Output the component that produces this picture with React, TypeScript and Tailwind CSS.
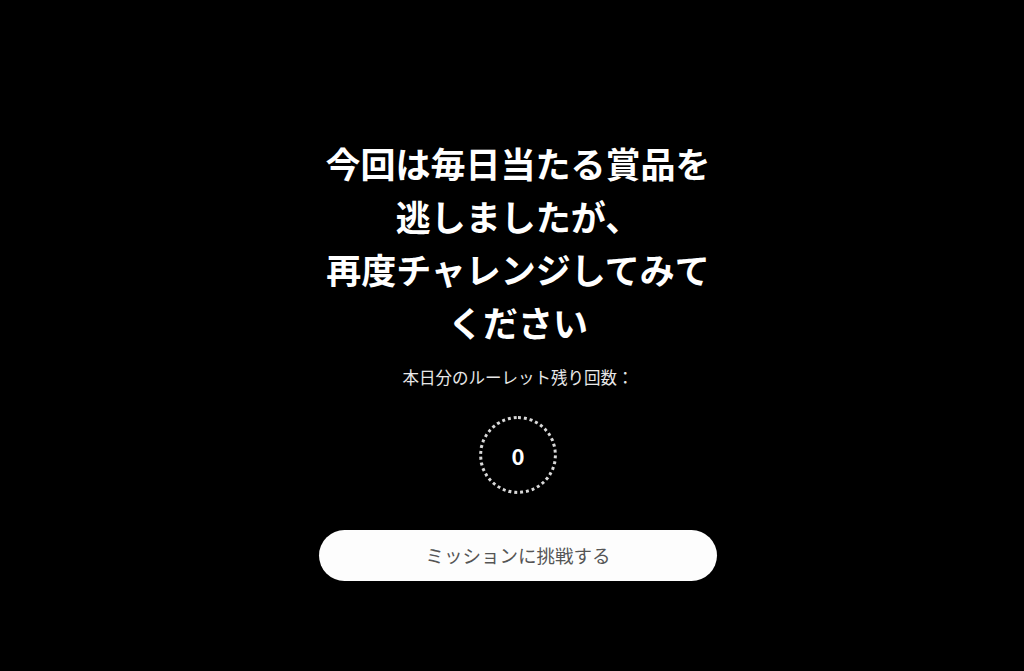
export default function App() {
  return (
    <div
      className="w-full h-[671px] bg-black flex flex-col items-center pl-3"
      style={{ fontFamily: '"Noto Sans CJK JP", "Noto Sans", sans-serif' }}
    >
      <h1 className="mt-[136px] w-[400px] text-center text-white font-bold text-[35px] leading-[53px]">
        今回は毎日当たる賞品を
        <br />
        逃しましたが、
        <br />
        再度チャレンジしてみてください
      </h1>
      <p className="mt-[17px] text-[16.5px] leading-6 text-[#e8e8e8]">本日分のルーレット残り回数：</p>
      <div className="mt-[27px] w-[78px] h-[78px] rounded-full border-[3px] border-dotted border-[#d9d9d9] flex items-center justify-center">
        <span className="text-white font-bold text-[22px] leading-none">0</span>
      </div>
      <button className="mt-[36px] w-[398px] h-[51px] rounded-full bg-[#fdfdfd] text-[#555555] text-[18.5px]">
        ミッションに挑戦する
      </button>
    </div>
  );
}
